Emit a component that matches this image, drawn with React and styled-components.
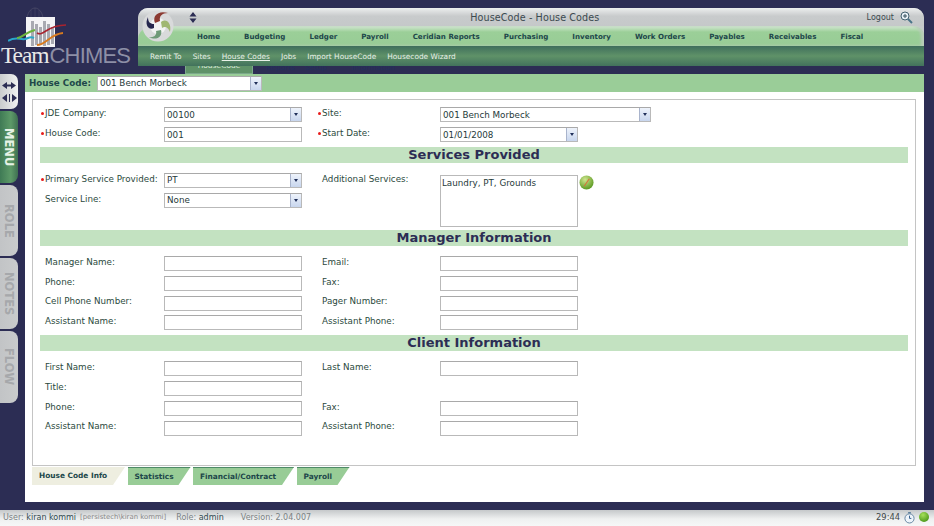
// App.jsx
import React from 'react';
import styled, { createGlobalStyle } from 'styled-components';

const GlobalStyle = createGlobalStyle`
  html, body {
    margin: 0;
    padding: 0;
    background: #2c2d54;
  }
  * { box-sizing: border-box; }
`;

const Page = styled.div`
  width: 934px;
  height: 526px;
  overflow: hidden;
  display: flex;
  flex-direction: column;
  background: #2c2d54;
  font-family: "DejaVu Sans", Verdana, sans-serif;
  font-size: 8.75px;
  color: #2b4a40;
`;

/* header */
const Header = styled.div`
  display: flex;
  height: 74px;
  flex: none;
`;

const LogoBox = styled.div`
  width: 138px;
  flex: none;
  display: flex;
  flex-direction: column;
  padding-top: 7px;
`;

const LogoSvg = styled.svg`
  margin-left: 8px;
  flex: none;
`;

const LogoWord = styled.div`
  font-family: "Liberation Serif", serif;
  font-size: 23.5px;
  line-height: 22px;
  letter-spacing: -1.1px;
  color: #e8e8e8;
  white-space: nowrap;
  margin-top: -3px;
  padding-left: 1px;
  span {
    font-family: "Liberation Sans", sans-serif;
    font-weight: 400;
    font-size: 22px;
    letter-spacing: -0.8px;
    color: #8d8fa6;
    margin-left: 1px;
  }
`;

const HeaderRight = styled.div`
  flex: 1;
  display: flex;
  flex-direction: column;
  padding: 8px 10px 0 0;
`;

const MenuPanel = styled.div`
  height: 58px;
  border-radius: 10px 10px 0 0;
  overflow: hidden;
  background: #c6cacb;
  display: flex;
  flex-direction: column;
  position: relative;
`;

const TitleBar = styled.div`
  height: 18px;
  flex: none;
  display: flex;
  align-items: center;
  padding-right: 11px;
  background: linear-gradient(#eceeee 0, #c8cbcc 45%, #c5c8c9 100%);
  font-size: 9.6px;
  color: #3c4a50;
`;

const Swirl = styled.svg`
  position: absolute;
  left: 4px;
  top: 1px;
  width: 32px;
  height: 34px;
`;

const SortArrows = styled.svg`
  position: absolute;
  left: 51px;
  top: 4px;
`;

const Title = styled.div`
  flex: 1;
  text-align: center;
  padding-left: 65px;
  letter-spacing: 0.1px;
`;

const Logout = styled.div`
  font-size: 8px;
  margin-right: 6px;
`;

const MainNav = styled.div`
  height: 20px;
  flex: none;
  display: flex;
  align-items: center;
  gap: 24px;
  padding-left: 59px;
  border-radius: 14px 10px 0 0;
  background: linear-gradient(#d5e8d4 0, #9bcf98 30%, #98cc96 100%);
  box-shadow: inset -3px 0 3px #b9cdb9;
  font-weight: 700;
  font-size: 7.1px;
  color: #20474a;
`;

const MainNavItem = styled.div`
  white-space: nowrap;
`;

const SubNav = styled.div`
  height: 20px;
  flex: none;
  display: flex;
  align-items: center;
  padding-left: 12px;
  gap: 11px;
  background: linear-gradient(#3f6f5c 0, #5f9268 50%, #42725c 100%);
  color: #e9f1e9;
  font-size: 7.4px;
`;

const SubNavItem = styled.span`
  text-decoration: ${({ $active }) => ($active ? 'underline' : 'none')};
  white-space: nowrap;
`;

const PeekRow = styled.div`
  height: 8px;
  display: flex;
  padding-left: 47px;
  overflow: hidden;
`;

const PeekTab = styled.div`
  width: 68px;
  background: #5f9268;
  border: 1px solid #7ba98a;
  border-top: 0;
  color: #d7e6d8;
  font-size: 7.5px;
  line-height: 7px;
  text-align: center;
  overflow: hidden;
`;

const PeekLabel = styled.div`
  margin-top: -4px;
`;

const PeekDark = styled.div`
  margin: -3px 0 0 ${({ $ml }) => $ml}px;
  color: #23305c;
  font-size: 7.5px;
  white-space: nowrap;
`;

/* body */
const Body = styled.div`
  flex: 1;
  display: flex;
  min-height: 0;
`;

const Rail = styled.div`
  width: 25px;
  flex: none;
  display: flex;
  flex-direction: column;
  gap: 2px;
`;

const Toggle = styled.div`
  width: 18px;
  height: 35px;
  border-radius: 0 7px 7px 0;
  background: linear-gradient(90deg, #c9cbcd, #f1f2f2);
  display: flex;
  flex-direction: column;
  align-items: center;
  justify-content: center;
  gap: 5px;
`;

const RailTab = styled.div`
  width: 18px;
  height: ${({ $h }) => $h}px;
  border-radius: 0 8px 8px 0;
  background: ${({ $active }) =>
    $active ? 'linear-gradient(90deg, #3f7a55, #5d9a68 60%, #3f7052)' : 'linear-gradient(90deg, #c2c4c6, #c9cbcc)'};
  color: ${({ $active }) => ($active ? '#e6f2e6' : '#a6a8ab')};
  font-size: 11.5px;
  font-weight: 700;
  writing-mode: vertical-rl;
  display: flex;
  align-items: center;
  justify-content: center;
`;

const Content = styled.div`
  width: 899px;
  height: 428px;
  flex: none;
  background: #fff;
  display: flex;
  flex-direction: column;
`;

const CodeBar = styled.div`
  height: 18px;
  flex: none;
  background: #9acd98;
  display: flex;
  align-items: center;
  padding-left: 4px;
  gap: 6px;
  font-weight: 700;
  color: #20474a;
`;

const FormBox = styled.div`
  height: 367px;
  margin: 7px 8px 0 7px;
  flex: none;
  border: 1px solid #c4c4c4;
  padding: 5px 7px 0;
  display: flex;
  flex-direction: column;
`;

const Row = styled.div`
  display: flex;
  align-items: center;
  height: 19.8px;
  flex: none;
`;

const Label = styled.div`
  width: ${({ $w }) => $w}px;
  flex: none;
  padding-left: 5px;
  position: relative;
  white-space: nowrap;
  margin-top: -3.4px;
  ${({ $req }) =>
    $req &&
    `&::before {
      content: '';
      position: absolute;
      left: 1px;
      top: 4px;
      width: 3px;
      height: 3px;
      border-radius: 50%;
      background: #e81c1c;
    }`}
`;

const AdditionalLabel = styled(Label)`
  margin-top: 3px;
`;

const Gap = styled.div`
  width: 15px;
  flex: none;
`;

const Field = styled.div`
  width: ${({ $w }) => $w || 138}px;
  height: 15px;
  flex: none;
  border: 1px solid #b9b9b9;
  border-top-color: #a9a9a9;
  background: #fff;
  padding-left: 2px;
  display: flex;
  align-items: center;
  justify-content: space-between;
  font-weight: 400;
  color: #263a3a;
  white-space: nowrap;
`;

const DropButton = styled.div`
  width: 11px;
  height: 13px;
  flex: none;
  background: linear-gradient(#eef3fb, #c8d6ee);
  border-left: 1px solid #a9b4cc;
  display: flex;
  align-items: center;
  justify-content: center;
  &::after {
    content: '';
    border-left: 2.5px solid transparent;
    border-right: 2.5px solid transparent;
    border-top: 3px solid #20305a;
  }
`;

const SectionBar = styled.div`
  height: 16px;
  flex: none;
  margin: ${({ $mt }) => $mt || 0}px 0 ${({ $mb }) => $mb || 0}px;
  background: #c3e2c1;
  text-align: center;
  font-size: 13px;
  line-height: 16px;
  font-weight: 700;
  color: #2c2d54;
`;

const ServicesBlock = styled.div`
  display: flex;
  height: 67px;
  flex: none;
  padding-top: 8px;
`;

const ServicesLeft = styled.div`
  width: 277px;
  flex: none;
`;

const ServicesMiddle = styled.div`
  display: flex;
  align-items: flex-start;
`;

const TextArea = styled.div`
  width: 138px;
  height: 52px;
  border: 1px solid #b9b9b9;
  padding: 2px 1px;
  color: #263a3a;
  margin-top: 4px;
`;

const EditIcon = styled.svg`
  width: 15px;
  height: 15px;
  margin: 4px 0 0 1px;
  flex: none;
`;

const TabStrip = styled.div`
  display: flex;
  gap: 2.5px;
  padding-left: 7px;
  height: 18px;
  margin-top: 1px;
  flex: none;
`;

const Tab = styled.div`
  width: ${({ $w }) => $w}px;
  height: 18px;
  padding-left: 7px;
  clip-path: polygon(0 0, 100% 0, calc(100% - 12px) 100%, 0 100%);
  background: ${({ $active }) => ($active ? '#eeeee0' : '#98cc96')};
  border-top: ${({ $active }) => ($active ? '0' : '1px solid #4f8a68')};
  font-size: 7.4px;
  font-weight: 700;
  line-height: 18px;
  color: #20474a;
  white-space: nowrap;
`;

/* status bar */
const StatusBar = styled.div`
  height: 16px;
  flex: none;
  margin-top: 8px;
  padding: 0 5px 2px 3px;
  display: flex;
  align-items: center;
  background: linear-gradient(#c5c8ca 0, #eef0f0 55%, #f6f7f7 100%);
  font-size: 8px;
  color: #7a8284;
`;

const StatusItem = styled.span`
  margin-right: ${({ $mr }) => $mr || 0}px;
  white-space: nowrap;
  b {
    font-weight: 400;
    color: #304a50;
  }
`;

const Domain = styled.span`
  font-size: 6.9px;
  color: #888;
  margin: 0 10px 0 4px;
`;

const StatusRight = styled.div`
  margin-left: auto;
  display: flex;
  align-items: center;
  gap: 4px;
  color: #40484a;
  font-size: 8.3px;
`;

const navItems = [
  'Home', 'Budgeting', 'Ledger', 'Payroll', 'Ceridian Reports',
  'Purchasing', 'Inventory', 'Work Orders', 'Payables', 'Receivables', 'Fiscal',
];

const subItems = ['Remit To', 'Sites', 'House Codes', 'Jobs', 'Import HouseCode', 'Housecode Wizard'];

const railTabs = [
  ['MENU', 72, true],
  ['ROLE', 71, false],
  ['NOTES', 71, false],
  ['FLOW', 72, false],
];

const managerRows = [
  ['Manager Name:', 'Email:'],
  ['Phone:', 'Fax:'],
  ['Cell Phone Number:', 'Pager Number:'],
  ['Assistant Name:', 'Assistant Phone:'],
];

const clientRows = [
  ['First Name:', 'Last Name:'],
  ['Title:', null],
  ['Phone:', 'Fax:'],
  ['Assistant Name:', 'Assistant Phone:'],
];

const bottomTabs = [
  ['House Code Info', 93, true],
  ['Statistics', 63],
  ['Financial/Contract', 101],
  ['Payroll', 53],
];

const ChimesLogo = () => (
  <LogoSvg width="70" height="40" viewBox="0 0 70 40">
    <path d="M19 11 C20 4 24 1 27 1 C30 1 34 4 35 11" fill="none" stroke="#55566f" strokeWidth="0.6" />
    <path d="M27 1 V11 M23 3 V11 M31 3 V11" fill="none" stroke="#55566f" strokeWidth="0.4" />
    <rect x="18" y="10" width="29" height="30" fill="#f4f4f6" />
    {[23, 27, 31, 35, 39, 43].map((x, i) => (
      <rect key={x} x={x} y={14 + (i % 3) * 3} width="3" height={25 - (i % 3) * 4} fill="#a9aab2" />
    ))}
    <path d="M0 34 C8 29 12 33 17 32 C21 31 22 29 26 31" fill="none" stroke="#2aa6c9" strokeWidth="2" />
    <path d="M9 31 C14 31 18 25 27 23" fill="none" stroke="#6cb43c" strokeWidth="2" />
    <path d="M29 26 C36 30 38 18 58 18" fill="none" stroke="#a9232f" strokeWidth="1.6" />
    <path d="M29 38 C38 38 42 27 55 26" fill="none" stroke="#d87a1e" strokeWidth="1.8" />
  </LogoSvg>
);

const SwirlIcon = () => (
  <Swirl viewBox="0 0 32 34">
    <circle cx="16" cy="17" r="15.5" fill="#d9dadb" />
    <circle cx="16" cy="17" r="8" fill="#f2f3f3" />
    <path d="M13 14 C10 7 16 1 26 4 C20 4 17 7 18 12 Z" fill="#8c3a32" />
    <path d="M19 13 C24 9 30 14 28 23 C26 18 23 17 20 19 Z" fill="#a0b772" />
    <path d="M19 21 C21 28 14 32 7 28 C13 29 15 25 14 22 Z" fill="#6f9a78" />
    <path d="M12 19 C7 22 2 16 6 8 C6 13 8 15 12 15 Z" fill="#25264e" />
  </Swirl>
);

const SortIcon = () => (
  <SortArrows width="8" height="11" viewBox="0 0 8 11">
    <path d="M4 0 L7.5 4.5 H0.5 Z M4 11 L0.5 6.5 H7.5 Z" fill="#2c2d54" />
  </SortArrows>
);

const SearchIcon = () => (
  <svg width="13" height="13" viewBox="0 0 13 13">
    <circle cx="5" cy="5" r="4" fill="#e8f0f6" stroke="#41606e" strokeWidth="1" />
    <path d="M5 3 V7 M3 5 H7" stroke="#34505c" strokeWidth="1" />
    <path d="M8 8 L12 12" stroke="#4a7488" strokeWidth="2" />
  </svg>
);

const HorizArrows = () => (
  <svg width="14" height="7" viewBox="0 0 14 7">
    <path d="M0 3.5 L5 0 V7 Z M14 3.5 L9 0 V7 Z" fill="#2c2d54" />
    <rect x="5" y="2.5" width="4" height="2" fill="#2c2d54" />
  </svg>
);

const SplitArrows = () => (
  <svg width="15" height="8" viewBox="0 0 15 8">
    <path d="M0 4 L5 0 V8 Z M15 4 L10 0 V8 Z" fill="#2c2d54" />
    <rect x="7" y="0" width="1" height="8" fill="#2c2d54" />
  </svg>
);

const CheckEdit = () => (
  <EditIcon viewBox="0 0 16 16">
    <defs>
      <radialGradient id="ball" cx="40%" cy="30%" r="70%">
        <stop offset="0" stopColor="#cfe58f" />
        <stop offset="1" stopColor="#5c9a22" />
      </radialGradient>
    </defs>
    <circle cx="8" cy="8" r="7.5" fill="url(#ball)" />
    <path d="M5.5 12 L11 4" stroke="#d8703a" strokeWidth="1.2" />
  </EditIcon>
);

const Timer = () => (
  <svg width="11" height="13" viewBox="0 0 12 13">
    <circle cx="6" cy="7.5" r="5" fill="#eef4fa" stroke="#5e7f9c" strokeWidth="1" />
    <rect x="4.5" y="0.5" width="3" height="1.6" fill="#5e7f9c" />
    <path d="M6 7.5 V4.5 M6 7.5 H8" stroke="#2c5a8a" strokeWidth="1" />
  </svg>
);

const StatusDot = () => (
  <svg width="10" height="10" viewBox="0 0 11 11">
    <defs>
      <radialGradient id="dot" cx="40%" cy="30%" r="70%">
        <stop offset="0" stopColor="#a6e05a" />
        <stop offset="1" stopColor="#4f9a1c" />
      </radialGradient>
    </defs>
    <circle cx="5.5" cy="5.5" r="5.5" fill="url(#dot)" />
  </svg>
);

const FormRows = ({ rows }) =>
  rows.map(([left, right]) => (
    <Row key={left}>
      <Label $w={124}>{left}</Label>
      <Field />
      <Gap />
      {right && <Label $w={123}>{right}</Label>}
      {right && <Field />}
    </Row>
  ));

const App = () => {
  return (
    <Page>
      <GlobalStyle />
      <Header>
        <LogoBox>
          <ChimesLogo />
          <LogoWord>Team<span>CHIMES</span></LogoWord>
        </LogoBox>
        <HeaderRight>
          <MenuPanel>
            <TitleBar>
              <Title>HouseCode - House Codes</Title>
              <Logout>Logout</Logout>
              <SearchIcon />
            </TitleBar>
            <MainNav>
              {navItems.map((name) => (
                <MainNavItem key={name}>{name}</MainNavItem>
              ))}
            </MainNav>
            <SubNav>
              {subItems.map((name) => (
                <SubNavItem key={name} $active={name === 'House Codes'}>{name}</SubNavItem>
              ))}
            </SubNav>
            <SwirlIcon />
            <SortIcon />
          </MenuPanel>
          <PeekRow>
            <PeekTab><PeekLabel>HouseCode</PeekLabel></PeekTab>
            <PeekDark $ml={13}>Reports</PeekDark>
            <PeekDark $ml={10}>Setup</PeekDark>
            <PeekDark $ml={25}>Information</PeekDark>
          </PeekRow>
        </HeaderRight>
      </Header>

      <Body>
        <Rail>
          <Toggle>
            <HorizArrows />
            <SplitArrows />
          </Toggle>
          {railTabs.map(([name, h, active]) => (
            <RailTab key={name} $h={h} $active={active}>{name}</RailTab>
          ))}
        </Rail>

        <Content>
          <CodeBar>
            House Code:
            <Field $w={165}>
              001 Bench Morbeck
              <DropButton />
            </Field>
          </CodeBar>

          <FormBox>
            <Row>
              <Label $w={124} $req>JDE Company:</Label>
              <Field>00100<DropButton /></Field>
              <Gap />
              <Label $w={123} $req>Site:</Label>
              <Field $w={211}>001 Bench Morbeck<DropButton /></Field>
            </Row>
            <Row>
              <Label $w={124} $req>House Code:</Label>
              <Field>001</Field>
              <Gap />
              <Label $w={123} $req>Start Date:</Label>
              <Field>01/01/2008<DropButton /></Field>
            </Row>
            <SectionBar $mt={2}>Services Provided</SectionBar>

            <ServicesBlock>
              <ServicesLeft>
                <Row>
                  <Label $w={124} $req>Primary Service Provided:</Label>
                  <Field>PT<DropButton /></Field>
                </Row>
                <Row>
                  <Label $w={124}>Service Line:</Label>
                  <Field>None<DropButton /></Field>
                </Row>
              </ServicesLeft>
              <ServicesMiddle>
                <AdditionalLabel $w={123}>Additional Services:</AdditionalLabel>
                <TextArea>Laundry, PT, Grounds</TextArea>
                <CheckEdit />
              </ServicesMiddle>
            </ServicesBlock>

            <SectionBar $mb={8}>Manager Information</SectionBar>
            <FormRows rows={managerRows} />
            <SectionBar $mt={2} $mb={8}>Client Information</SectionBar>
            <FormRows rows={clientRows} />
          </FormBox>

          <TabStrip>
            {bottomTabs.map(([name, w, active]) => (
              <Tab key={name} $w={w} $active={active}>{name}</Tab>
            ))}
          </TabStrip>
        </Content>
      </Body>

      <StatusBar>
        <StatusItem>User: <b>kiran kommi</b></StatusItem>
        <Domain>[persistech\kiran kommi]</Domain>
        <StatusItem $mr={17}>Role: <b>admin</b></StatusItem>
        <StatusItem>Version: 2.04.007</StatusItem>
        <StatusRight>
          29:44
          <Timer />
          <StatusDot />
        </StatusRight>
      </StatusBar>
    </Page>
  );
};

export default App;
